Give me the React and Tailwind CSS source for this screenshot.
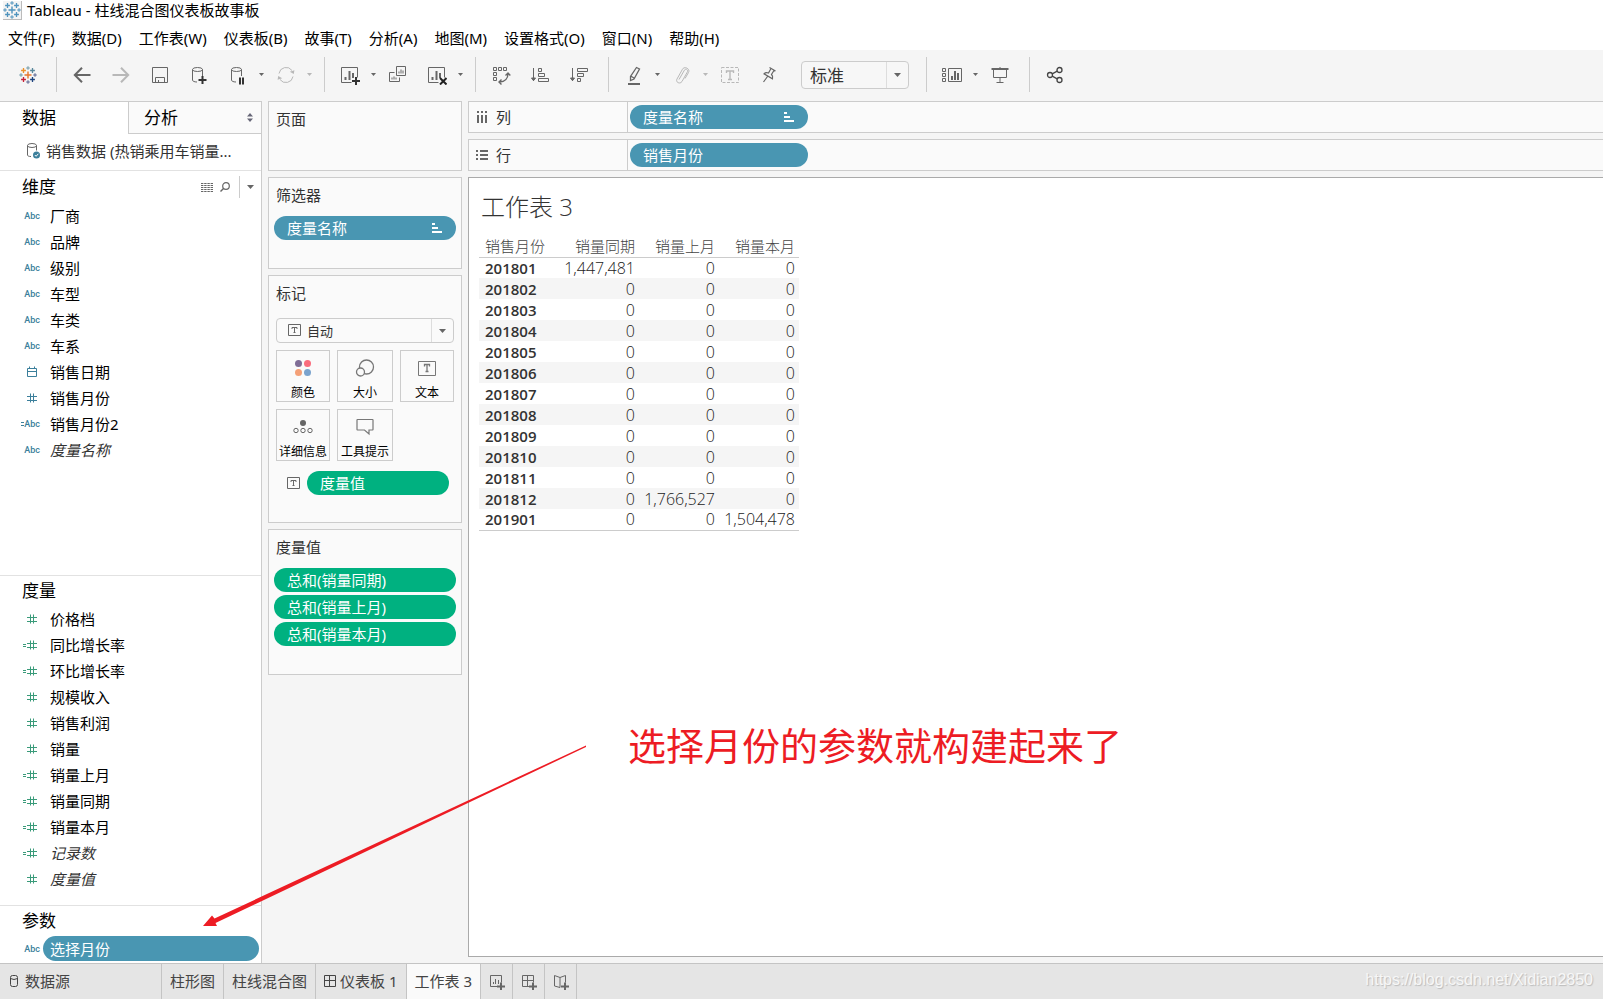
import { useState } from 'react';

const menus = ['文件(F)', '数据(D)', '工作表(W)', '仪表板(B)', '故事(T)', '分析(A)', '地图(M)', '设置格式(O)', '窗口(N)', '帮助(H)'];

const dimensions = [
  { name: '厂商', type: 'abc' },
  { name: '品牌', type: 'abc' },
  { name: '级别', type: 'abc' },
  { name: '车型', type: 'abc' },
  { name: '车类', type: 'abc' },
  { name: '车系', type: 'abc' },
  { name: '销售日期', type: 'date' },
  { name: '销售月份', type: 'number' },
  { name: '销售月份2', type: 'abc', calculated: true },
  { name: '度量名称', type: 'abc', generated: true },
];

const measures = [
  { name: '价格档', type: 'number' },
  { name: '同比增长率', type: 'number', calculated: true },
  { name: '环比增长率', type: 'number', calculated: true },
  { name: '规模收入', type: 'number' },
  { name: '销售利润', type: 'number' },
  { name: '销量', type: 'number' },
  { name: '销量上月', type: 'number', calculated: true },
  { name: '销量同期', type: 'number', calculated: true },
  { name: '销量本月', type: 'number', calculated: true },
  { name: '记录数', type: 'number', calculated: true, generated: true },
  { name: '度量值', type: 'number', generated: true },
];

const rows = [
  ['201801', '1,447,481', '0', '0'],
  ['201802', '0', '0', '0'],
  ['201803', '0', '0', '0'],
  ['201804', '0', '0', '0'],
  ['201805', '0', '0', '0'],
  ['201806', '0', '0', '0'],
  ['201807', '0', '0', '0'],
  ['201808', '0', '0', '0'],
  ['201809', '0', '0', '0'],
  ['201810', '0', '0', '0'],
  ['201811', '0', '0', '0'],
  ['201812', '0', '1,766,527', '0'],
  ['201901', '0', '0', '1,504,478'],
];

/* ---------- Icons ---------- */

function Svg({ w = 20, h = 20, className = '', children }) {
  return (
    <svg width={w} height={h} viewBox={`0 0 ${w} ${h}`} fill="none" stroke="currentColor" className={`shrink-0 ${className}`} aria-hidden="true">
      {children}
    </svg>
  );
}

function Plus({ x, y, r, color, width = 1 }) {
  return <path d={`M${x - r} ${y}h${r * 2}M${x} ${y - r}v${r * 2}`} stroke={color} strokeWidth={width} />;
}

function TableauMark({ mono }) {
  const c = (color) => (mono ? '#4f93bd' : color);
  return (
    <Svg w={18} h={18}>
      <Plus x={9} y={9} r={3.5} color={c('#e8762c')} width={1.4} />
      <Plus x={9} y={2} r={1.8} color={c('#7199a6')} />
      <Plus x={9} y={16} r={1.8} color={c('#5b6591')} />
      <Plus x={2} y={9} r={1.8} color={c('#7199a6')} />
      <Plus x={16} y={9} r={1.8} color={c('#5b6591')} />
      <Plus x={4.5} y={4.5} r={2.4} color={c('#eb912c')} width={1.3} />
      <Plus x={13.5} y={4.5} r={2.4} color={c('#59879b')} width={1.3} />
      <Plus x={4.5} y={13.5} r={2.4} color={c('#c72035')} width={1.3} />
      <Plus x={13.5} y={13.5} r={2.4} color={c('#1f447e')} width={1.3} />
    </Svg>
  );
}

function Caret({ className = '' }) {
  return (
    <svg width="7" height="4" viewBox="0 0 7 4" className={`shrink-0 ${className}`} aria-hidden="true">
      <path d="M0 0h7L3.5 4z" fill="currentColor" />
    </svg>
  );
}

function SmallCaret() {
  return (
    <svg width="5" height="3" viewBox="0 0 5 3" aria-hidden="true">
      <path d="M0 0h5L2.5 3z" fill="currentColor" />
    </svg>
  );
}

const BackIcon = () => (
  <Svg><path d="M18.5 10H3M10 2.8L2.8 10l7.2 7.2" strokeWidth="2" /></Svg>
);
const ForwardIcon = () => (
  <Svg><path d="M1.5 10H17M10 2.8l7.2 7.2-7.2 7.2" strokeWidth="2" /></Svg>
);
const SaveIcon = () => (
  <Svg><path d="M2.5 2.5h15v15h-15zM5.5 17.5v-5h9v5M8.5 17.5v-2.5" /></Svg>
);
const DbPath = () => (
  <>
    <ellipse cx="8.5" cy="4.5" rx="5" ry="2" />
    <path d="M3.5 4.5v10.5c0 1.2 1.8 2 4.5 2M13.5 4.5v6.5" />
  </>
);
const DbAddIcon = () => (
  <Svg>
    <DbPath />
    <path d="M9.5 15h8M13.5 11v8" stroke="#333" strokeWidth="2" />
  </Svg>
);
const DbPauseIcon = () => (
  <Svg>
    <DbPath />
    <path d="M12 12.5v7M15 12.5v7" stroke="#333" strokeWidth="2" />
  </Svg>
);
const RefreshIcon = () => (
  <Svg>
    <path d="M3 8.5a7.2 7.2 0 0 1 13-3M17 11.5a7.2 7.2 0 0 1-13 3" />
    <path d="M17.8 9l-4-2.2 4.6-1.6zM2.2 11l4 2.2-4.6 1.6z" fill="currentColor" stroke="none" />
  </Svg>
);
const SheetPath = () => (
  <>
    <path d="M11.5 17.5h-10v-15h16v10" />
    <path d="M5.5 15v-3M9.5 15V6M13 13V8" strokeWidth="2" />
  </>
);
const NewSheetIcon = () => (
  <Svg>
    <SheetPath />
    <path d="M12 16h8M16 12v8" stroke="#333" strokeWidth="2" />
  </Svg>
);
const ClearSheetIcon = () => (
  <Svg>
    <SheetPath />
    <path d="M13 13l6.5 6.5M19.5 13L13 19.5" stroke="#222" strokeWidth="2" />
  </Svg>
);
const DuplicateIcon = () => (
  <Svg>
    <path d="M8.5 1.5h9v9h-9zM6.5 7.5h-5v9h10v-4" />
    <path d="M11 8.5v-2M13 8.5v-4M15 8.5v-3M4 14.5v-2M6 14.5v-3M8 14.5v-2" />
  </Svg>
);
const SwapIcon = () => (
  <Svg>
    <path d="M2.5 2.5h3v3h-3zM7.5 2.5h3v3h-3zM12.5 2.5h3v3h-3zM2.5 7.5h3v3h-3zM2.5 12.5h3v3h-3z" />
    <path d="M17 8.5c0 5-3 8.5-8.5 8.5M14.5 10.5l2.5-2.5 2.3 2.5M10.5 14.5L8 17l2.5 2.5" strokeWidth="1.4" />
  </Svg>
);
const SortAscIcon = () => (
  <Svg>
    <path d="M3.5 3v13M1.5 13h4l-2 2.7z" fill="currentColor" />
    <path d="M8.5 3.5h3v3h-3zM8.5 8.5h6v3h-6zM8.5 13.5h10v3h-10z" />
  </Svg>
);
const SortDescIcon = () => (
  <Svg>
    <path d="M3.5 3v13M1.5 13h4l-2 2.7z" fill="currentColor" />
    <path d="M8.5 3.5h10v3h-10zM8.5 8.5h6v3h-6zM8.5 13.5h3v3h-3z" />
  </Svg>
);
const HighlightIcon = () => (
  <Svg>
    <path d="M12.5 2.5l3 1.5-5.5 10-3.5 1.5v-4zM7 11.2l3 1.8" strokeWidth="1.3" />
    <path d="M4 19h12" strokeWidth="2" />
  </Svg>
);
const ClipIcon = () => (
  <Svg>
    <path d="M7 14.5l5.5-9.5c1-1.8 4-.3 3 1.7l-5.5 9.8c-1.8 3-6.8 1-5-2.5l5.5-9.8c1.8-3.4 8-.6 6 3.3l-3.5 6" />
  </Svg>
);
const LabelIcon = () => (
  <Svg>
    <path d="M1.5 2.5h17v15h-17z" strokeDasharray="3 1.5" />
    <path d="M6.5 8V6h7v2M10 6v8.5M8 14.5h4" strokeWidth="1.4" />
  </Svg>
);
const PinIcon = () => (
  <Svg>
    <path d="M10.500 2.500l6 3.500M12 3.500L9.500 8c-2-.8-3.500-.3-4.500.8l8.500 5c.6-1.500.3-3-1-4.300l2.800-4.500M8.500 11.500L4.500 17" strokeWidth="1.2" />
  </Svg>
);
const ShowMeIcon = () => (
  <Svg w={22}>
    <path d="M1.500 3.500h3v3h-3zM1.500 8.500h3v3h-3zM1.500 13.500h3v3h-3zM7.500 3.500h13v13h-13z" />
    <path d="M11 15v-4M14 15V6M17 15V8" strokeWidth="2" />
  </Svg>
);
const PresentIcon = () => (
  <Svg>
    <path d="M1.500 4h17" strokeWidth="2" />
    <path d="M3.500 4.500v8h13v-8M10 2v1M10 12.500v5M6.500 17.500h7" />
  </Svg>
);
const ShareIcon = () => (
  <Svg className="text-[#444]">
    <circle cx="5" cy="10" r="2.500" strokeWidth="1.300" />
    <circle cx="14.500" cy="5" r="2.500" strokeWidth="1.300" />
    <circle cx="14.500" cy="15" r="2.500" strokeWidth="1.300" />
    <path d="M7.200 8.800l5-2.600M7.200 11.200l5 2.600" strokeWidth="1.300" />
  </Svg>
);
const TextMarkIcon = () => (
  <Svg w={14} h={13}>
    <path d="M.5 .5h12v11h-12z" />
    <path d="M4 5V3.500h5V5M6.500 3.500v5M5.500 8.500h2" />
  </Svg>
);
const SortPillIcon = () => (
  <Svg w={10} h={10}>
    <path d="M0 1h3M0 5h6M0 9h10" strokeWidth="2" />
  </Svg>
);

/* ---------- Toolbar ---------- */

function ToolButton({ label, icon: Icon, menu, disabled }) {
  const color = disabled ? 'text-[#b8b8b8]' : 'text-[#666]';
  return (
    <>
      <button type="button" aria-label={label} disabled={disabled} className={`flex w-[39px] h-9 shrink-0 items-center justify-center ${color}`}>
        <Icon />
      </button>
      {menu && (
        <button type="button" aria-label={`${label} 选项`} disabled={disabled} className={`flex w-[9px] h-9 shrink-0 items-center justify-center ${color}`}>
          <SmallCaret />
        </button>
      )}
    </>
  );
}

function ToolGroup({ children }) {
  return <div className="flex items-center border-l border-[#ccc] h-[35px] pl-[5px] pr-2.5">{children}</div>;
}

function Toolbar() {
  return (
    <div className="flex items-center h-[51px] shrink-0 bg-[#f5f5f5] pb-0.5">
      <button type="button" aria-label="显示起始页" className="flex w-14 items-center justify-center">
        <TableauMark />
      </button>
      <ToolGroup>
        <ToolButton label="撤消" icon={BackIcon} />
        <ToolButton label="重做" icon={ForwardIcon} disabled />
        <ToolButton label="保存" icon={SaveIcon} />
        <ToolButton label="新建数据源" icon={DbAddIcon} />
        <ToolButton label="暂停自动更新" icon={DbPauseIcon} menu />
        <ToolButton label="运行更新" icon={RefreshIcon} menu disabled />
      </ToolGroup>
      <ToolGroup>
        <ToolButton label="新建工作表" icon={NewSheetIcon} menu />
        <ToolButton label="复制工作表" icon={DuplicateIcon} />
        <ToolButton label="清除工作表" icon={ClearSheetIcon} menu />
      </ToolGroup>
      <ToolGroup>
        <ToolButton label="交换行和列" icon={SwapIcon} />
        <ToolButton label="升序" icon={SortAscIcon} />
        <ToolButton label="降序" icon={SortDescIcon} />
      </ToolGroup>
      <ToolGroup>
        <ToolButton label="突出显示" icon={HighlightIcon} menu />
        <ToolButton label="组成员" icon={ClipIcon} menu disabled />
        <ToolButton label="显示标记标签" icon={LabelIcon} disabled />
        <ToolButton label="固定轴" icon={PinIcon} />
      </ToolGroup>
      <div className="relative ml-[3px] mr-[17px] flex h-7 w-[108px] shrink-0 items-center rounded-sm border border-[#ccc] bg-[#f7f7f7] text-[#333]">
        <select aria-label="适合" className="h-full w-full appearance-none pl-2 pt-0.5 text-[17px] outline-none">
          <option>标准</option>
          <option>适合宽度</option>
          <option>适合高度</option>
          <option>整个视图</option>
        </select>
        <span className="pointer-events-none absolute right-0 flex h-full w-[22px] items-center justify-center border-l border-[#ddd] text-[#666]">
          <Caret />
        </span>
      </div>
      <ToolGroup>
        <ToolButton label="智能推荐" icon={ShowMeIcon} menu />
        <ToolButton label="演示模式" icon={PresentIcon} />
      </ToolGroup>
      <ToolGroup>
        <ToolButton label="共享" icon={ShareIcon} />
      </ToolGroup>
    </div>
  );
}

/* ---------- Data pane ---------- */

function FieldIcon({ type, calculated }) {
  if (type === 'abc') {
    return (
      <span className="flex w-5 shrink-0 items-center justify-end font-['Roboto','Liberation_Sans',sans-serif] text-[9px] font-medium">
        {calculated && <Svg w={3} h={4}><path d="M0 .5h3M0 3.500h3" /></Svg>}
        Abc
      </span>
    );
  }
  if (type === 'date') {
    return <Svg w={20} h={12}><path d="M7.500 2.500h9v8h-9zM7.500 5.500h9M9.500 .5v2M14.500 .5v2" /></Svg>;
  }
  return (
    <Svg w={20} h={12}>
      <path d="M7 4.500h10M7 8.500h10M10.500 1.500v9M13.500 1.500v9" />
      {calculated && <path d="M3 5.500h3M3 7.500h3" />}
    </Svg>
  );
}

function Field({ field, color }) {
  return (
    <li className="flex h-[26px] items-center gap-2.5 pl-5">
      <span className={`flex ${color}`}><FieldIcon type={field.type} calculated={field.calculated} /></span>
      <span className={field.generated ? 'italic text-[#333]' : 'text-black'}>{field.name}</span>
    </li>
  );
}

function DataPane() {
  return (
    <aside className="flex w-[262px] shrink-0 flex-col border-r border-[#ccc] bg-white">
      <div className="flex h-[33px] shrink-0 border-t border-[#ccc] text-[17px] text-black">
        <button type="button" className="flex w-32 items-center pl-[22px]">数据</button>
        <button type="button" className="flex flex-1 items-center justify-between border-b border-l border-[#ccc] bg-[#fafafa] pl-[15px] pr-2">
          分析
          <svg width="6" height="9" viewBox="0 0 6 9" aria-hidden="true">
            <path d="M0 3.500h6L3 0zM0 5.500h6L3 9z" fill="#667" />
          </svg>
        </button>
      </div>
      <div className="flex h-[37px] shrink-0 items-center gap-1.5 border-b border-[#e2e2e2] pb-0.5 pl-6 text-[#333]">
        <Svg w={16} h={18} className="text-[#666]">
          <ellipse cx="8" cy="3.500" rx="4.500" ry="2" />
          <path d="M3.500 3.500v9.500c0 1 1.500 1.500 3.500 1.500M12.500 3.500v5" />
          <circle cx="12.500" cy="13" r="3.500" fill="#3b7f9b" stroke="none" />
          <path d="M10.800 13l1.300 1.300 2.200-2.500" stroke="#fff" />
        </Svg>
        <span>销售数据 (热销乘用车销量...</span>
      </div>

      <div className="flex h-8 shrink-0 items-center">
        <h2 className="flex-1 pl-[22px] text-[17px] text-black">维度</h2>
        <button type="button" aria-label="查看数据" className="flex w-5 justify-center text-[#666]">
          <Svg w={12} h={9}><path d="M0 .5h12M0 2.500h12M0 4.500h12M0 6.500h12M0 8.500h12" strokeDasharray="2.400 .8" /></Svg>
        </button>
        <button type="button" aria-label="查找字段" className="flex w-4 justify-center text-[#666]">
          <Svg w={10} h={10}><circle cx="6" cy="4" r="3.300" strokeWidth="1.200" /><path d="M3.500 6.500L.5 9.500" strokeWidth="1.400" /></Svg>
        </button>
        <button type="button" aria-label="菜单" className="ml-1.5 flex h-[22px] w-[22px] items-center justify-center border-l border-[#ccc] text-[#666]">
          <Caret />
        </button>
      </div>
      <ul className="flex-1">
        {dimensions.map((f) => <Field key={f.name} field={f} color="text-[#3b7f9b]" />)}
      </ul>

      <h2 className="flex h-[31px] shrink-0 items-center border-t border-[#e2e2e2] pl-[22px] text-[17px] text-black">度量</h2>
      <ul className="shrink-0 pb-[13px]">
        {measures.map((f) => <Field key={f.name} field={f} color="text-[#3a9b7a]" />)}
      </ul>

      <h2 className="flex h-[31px] shrink-0 items-center border-t border-[#e2e2e2] pl-[22px] text-[17px] text-black">参数</h2>
      <div className="flex h-[27px] shrink-0 items-start pl-5 pr-0.5">
        <span className="flex h-[25px] items-center text-[#3b7f9b]"><FieldIcon type="abc" /></span>
        <button type="button" className="ml-[3px] flex h-[25px] flex-1 items-center rounded-full bg-[#4996b2] pl-[7px] text-white">选择月份</button>
      </div>
    </aside>
  );
}

/* ---------- Shelves and cards ---------- */

function Pill({ label, sort, green, className = '' }) {
  return (
    <button type="button" className={`flex h-6 items-center justify-between rounded-full pl-[13px] pr-3.5 text-white ${green ? 'bg-[#00b180]' : 'bg-[#4996b2]'} ${className}`}>
      {label}
      {sort && <SortPillIcon />}
    </button>
  );
}

function Card({ title, className = '', children }) {
  return (
    <section className={`border border-[#ccc] bg-[#fafafa] px-[5px] ${className}`}>
      <h3 className="flex h-[34px] items-center pl-0.5 text-[#333]">{title}</h3>
      {children}
    </section>
  );
}

function MarkButton({ label, children }) {
  return (
    <button type="button" className="flex h-[52px] flex-col items-center justify-between border border-[#ccc] pt-2 text-xs text-black">
      {children}
      <span className="whitespace-nowrap leading-4">{label}</span>
    </button>
  );
}

function MarksCard() {
  return (
    <Card title="标记" className="h-[248px]">
      <div className="relative mx-0.5 mt-2 flex h-[25px] items-center rounded-sm border border-[#ccc] text-[#666]">
        <span className="pointer-events-none absolute left-[11px]"><TextMarkIcon /></span>
        <select aria-label="标记类型" className="h-full w-full appearance-none pl-[30px] text-[13px] text-[#333] outline-none">
          <option>自动</option>
          <option>条形图</option>
          <option>线</option>
          <option>文本</option>
        </select>
        <span className="pointer-events-none absolute right-0 flex h-full w-[22px] items-center justify-center border-l border-[#ddd]">
          <Caret />
        </span>
      </div>
      <div className="mx-0.5 mt-[7px] grid grid-cols-[54px_56px_54px] gap-[7px] text-[#777]">
        <MarkButton label="颜色">
          <Svg w={18} h={18}>
            <g stroke="none">
              <circle cx="4.500" cy="4.500" r="3.500" fill="#7f6d96" />
              <circle cx="13.500" cy="4.500" r="3.500" fill="#fa6c7d" />
              <circle cx="4.500" cy="13.500" r="3.500" fill="#f4a077" />
              <circle cx="13.500" cy="13.500" r="3.500" fill="#7ba3cd" />
            </g>
          </Svg>
        </MarkButton>
        <MarkButton label="大小">
          <Svg w={20} h={18} className="text-[#777]">
            <circle cx="11.500" cy="8" r="7" strokeWidth="1.300" />
            <circle cx="5.500" cy="13" r="4" fill="#fafafa" strokeWidth="1.300" />
          </Svg>
        </MarkButton>
        <MarkButton label="文本">
          <Svg w={18} h={18} className="text-[#777]">
            <path d="M.5 2.500h17v14h-17z" />
            <path d="M6.500 7.500v-2h5v2M9 5.500v7M7.500 12.500h3" strokeWidth="1.300" />
          </Svg>
        </MarkButton>
        <MarkButton label="详细信息">
          <Svg w={20} h={18} className="text-[#666]">
            <circle cx="10" cy="5" r="3" fill="currentColor" stroke="none" />
            <circle cx="3" cy="12.500" r="2.200" />
            <circle cx="10" cy="12.500" r="2.200" />
            <circle cx="17" cy="12.500" r="2.200" />
          </Svg>
        </MarkButton>
        <MarkButton label="工具提示">
          <Svg w={18} h={18} className="text-[#777]">
            <path d="M1.500 1.500h15q.5 0 .5.500v9.500q0 .5-.5.500h-3.500v4l-4.500-4h-7q-.5 0-.5-.5v-9.500q0-.5.500-.5z" strokeWidth="1.200" />
          </Svg>
        </MarkButton>
      </div>
      <div className="mt-2.5 flex items-center pl-[13px] pr-[7px] text-[#666]">
        <TextMarkIcon />
        <Pill label="度量值" green className="ml-1.5 flex-1" />
      </div>
    </Card>
  );
}

function Shelf({ icon, title, children }) {
  return (
    <div className="flex h-8 shrink-0 border-y border-l border-[#ccc] bg-[#fafafa]">
      <div className="flex w-[159px] items-center gap-2 border-r border-[#ccc] pl-[7px] text-[#333]">
        {icon}
        {title}
      </div>
      <div className="flex flex-1 items-center pl-0.5">{children}</div>
    </div>
  );
}

function CrossTab() {
  return (
    <table className="ml-2.5 w-80 table-fixed border-collapse border-b border-[#ccc] font-['Open_Sans','Noto_Sans_CJK_SC',sans-serif]">
      <thead>
        <tr className="h-[22px] border-b border-[#ccc] text-[15px] leading-5 text-[#444]">
          <th className="w-[80px] pl-1.5 text-left font-light">销售月份</th>
          <th className="w-[80px] pr-1 text-right font-light">销量同期</th>
          <th className="w-[80px] pr-1 text-right font-light">销量上月</th>
          <th className="w-[80px] pr-1 text-right font-light">销量本月</th>
        </tr>
      </thead>
      <tbody>
        {rows.map(([month, ...values]) => (
          <tr key={month} className="h-[21px] even:bg-[#f5f5f5]">
            <th className="pl-1.5 text-left text-[15px] leading-5 font-semibold text-[#333]">{month}</th>
            {values.map((v, i) => (
              <td key={i} className="pr-1 text-right text-[16px] leading-5 font-light text-[#222]">{v}</td>
            ))}
          </tr>
        ))}
      </tbody>
    </table>
  );
}

/* ---------- Sheet tabs ---------- */

function SheetTabs() {
  const [active, setActive] = useState('工作表 3');
  const tab = 'flex items-center border-r border-[#c4c4c4] px-2';

  return (
    <footer className="relative flex h-9 shrink-0 border-t border-[#c4c4c4] bg-[#e5e5e5] text-[#444]">
      <button type="button" className="flex w-[162px] items-center gap-1.5 border-r border-[#c4c4c4] pb-0.5 pl-2.5">
        <Svg w={9} h={12}><rect x=".5" y=".5" width="7" height="11" rx="2" /><path d="M.5 3.500q3.500 2 7 0" /></Svg>
        数据源
      </button>
      {['柱形图', '柱线混合图', '仪表板 1', '工作表 3'].map((name) => (
        <button key={name} type="button" onClick={() => setActive(name)} className={`${tab} gap-1 pb-0.5 ${active === name ? 'bg-[#fafafa]' : ''}`}>
          {name === '仪表板 1' && <Svg w={12} h={12}><path d="M.5 .5h11v11h-11zM.5 5.500h11M5.500 .5v11" /></Svg>}
          {name}
        </button>
      ))}
      <button type="button" aria-label="新建工作表" className="flex w-8 items-center justify-center border-r border-[#c4c4c4] text-[#666]">
        <Svg w={16} h={16}><path d="M8.500 12.500h-7v-11h11v7M4.500 10V8M6.500 10V5M9.500 10V6" /><path d="M8 12.500h8M12 8.500v7.500" strokeWidth="2" /></Svg>
      </button>
      <button type="button" aria-label="新建仪表板" className="flex w-8 items-center justify-center border-r border-[#c4c4c4] text-[#666]">
        <Svg w={16} h={16}><path d="M8.500 12.500h-7v-11h11v7M1.500 6.500h11M6.500 1.500v11" /><path d="M8 12.500h8M12 8.500v7.500" strokeWidth="2" /></Svg>
      </button>
      <button type="button" aria-label="新建故事" className="flex w-8 items-center justify-center border-r border-[#c4c4c4] text-[#666]">
        <Svg w={16} h={16}><path d="M7 13.500l-5.500-1.500V1.500L7 3.500l5.500-2v7M7 3.500v10" /><path d="M8 12.500h8M12 8.500v7.500" strokeWidth="2" /></Svg>
      </button>
      <span className="ml-auto flex items-center pr-2.5 pb-1 font-['Liberation_Sans',sans-serif] text-base text-[#f7f7f7] [text-shadow:1px_1px_1px_#bbb]">
        https://blog.csdn.net/Xidian2850
      </span>
    </footer>
  );
}

function App() {
  return (
    <div className="relative flex min-h-screen flex-col overflow-hidden bg-[#f5f5f5] font-['Noto_Sans','Noto_Sans_CJK_SC',sans-serif] text-[15px] leading-5">
      {/* Title bar */}
      <header className="flex h-[22px] shrink-0 items-center gap-[5px] bg-white pb-0.5 pl-[3px] text-black">
        <span className="flex border-b border-r border-[#bbb] bg-[#f4f4f4]"><TableauMark mono /></span>
        <h1>Tableau - 柱线混合图仪表板故事板</h1>
      </header>

      <nav className="flex h-7 shrink-0 items-center gap-[17px] bg-white pl-2 pt-1 text-black">
        {menus.map((m) => <button key={m} type="button">{m}</button>)}
      </nav>

      <Toolbar />

      <main className="flex flex-1">
        <DataPane />

        {/* Cards */}
        <div className="flex w-[206px] shrink-0 flex-col gap-1.5 px-1.5">
          <Card title="页面" className="h-[70px]" />
          <Card title="筛选器" className="h-[92px]">
            <Pill label="度量名称" sort className="mt-1 w-full" />
          </Card>
          <MarksCard />
          <Card title="度量值" className="h-[146px]">
            <div className="flex flex-col gap-[3px] pt-1">
              <Pill label="总和(销量同期)" green />
              <Pill label="总和(销量上月)" green />
              <Pill label="总和(销量本月)" green />
            </div>
          </Card>
        </div>

        {/* Worksheet */}
        <div className="flex flex-1 flex-col gap-1.5 pb-1.5">
          <Shelf
            title="列"
            icon={<Svg w={12} h={12} className="text-[#666]"><path d="M2 0v2M6 0v2M10 0v2M2 4v8M6 4v8M10 4v8" strokeWidth="2" /></Svg>}
          >
            <Pill label="度量名称" sort className="w-[178px]" />
          </Shelf>
          <Shelf
            title="行"
            icon={<Svg w={12} h={12} className="text-[#666]"><path d="M0 2h2M0 6h2M0 10h2M4 2h8M4 6h8M4 10h8" strokeWidth="2" /></Svg>}
          >
            <Pill label="销售月份" className="w-[178px]" />
          </Shelf>
          <section className="flex-1 border-y border-l border-[#aaa] bg-white">
            <h2 className="flex h-[57px] items-center pl-3 font-['Open_Sans','Noto_Sans_CJK_SC',sans-serif] text-2xl font-light text-[#333]">工作表 3</h2>
            <CrossTab />
          </section>
        </div>
      </main>

      <SheetTabs />

      {/* Annotation */}
      <svg width="400" height="200" viewBox="0 0 400 200" className="pointer-events-none absolute left-[200px] top-[740px]" aria-hidden="true">
        <path d="M386 5.500L14.500 178.500l-2.500-3L3 186h14l-1.500-3L386 7z" fill="#ed1c24" />
      </svg>
      <p className="pointer-events-none absolute left-[628px] top-[720px] whitespace-nowrap text-[38px] leading-[50px] text-[#ed1c24]">
        选择月份的参数就构建起来了
      </p>
    </div>
  );
}

export default App;
